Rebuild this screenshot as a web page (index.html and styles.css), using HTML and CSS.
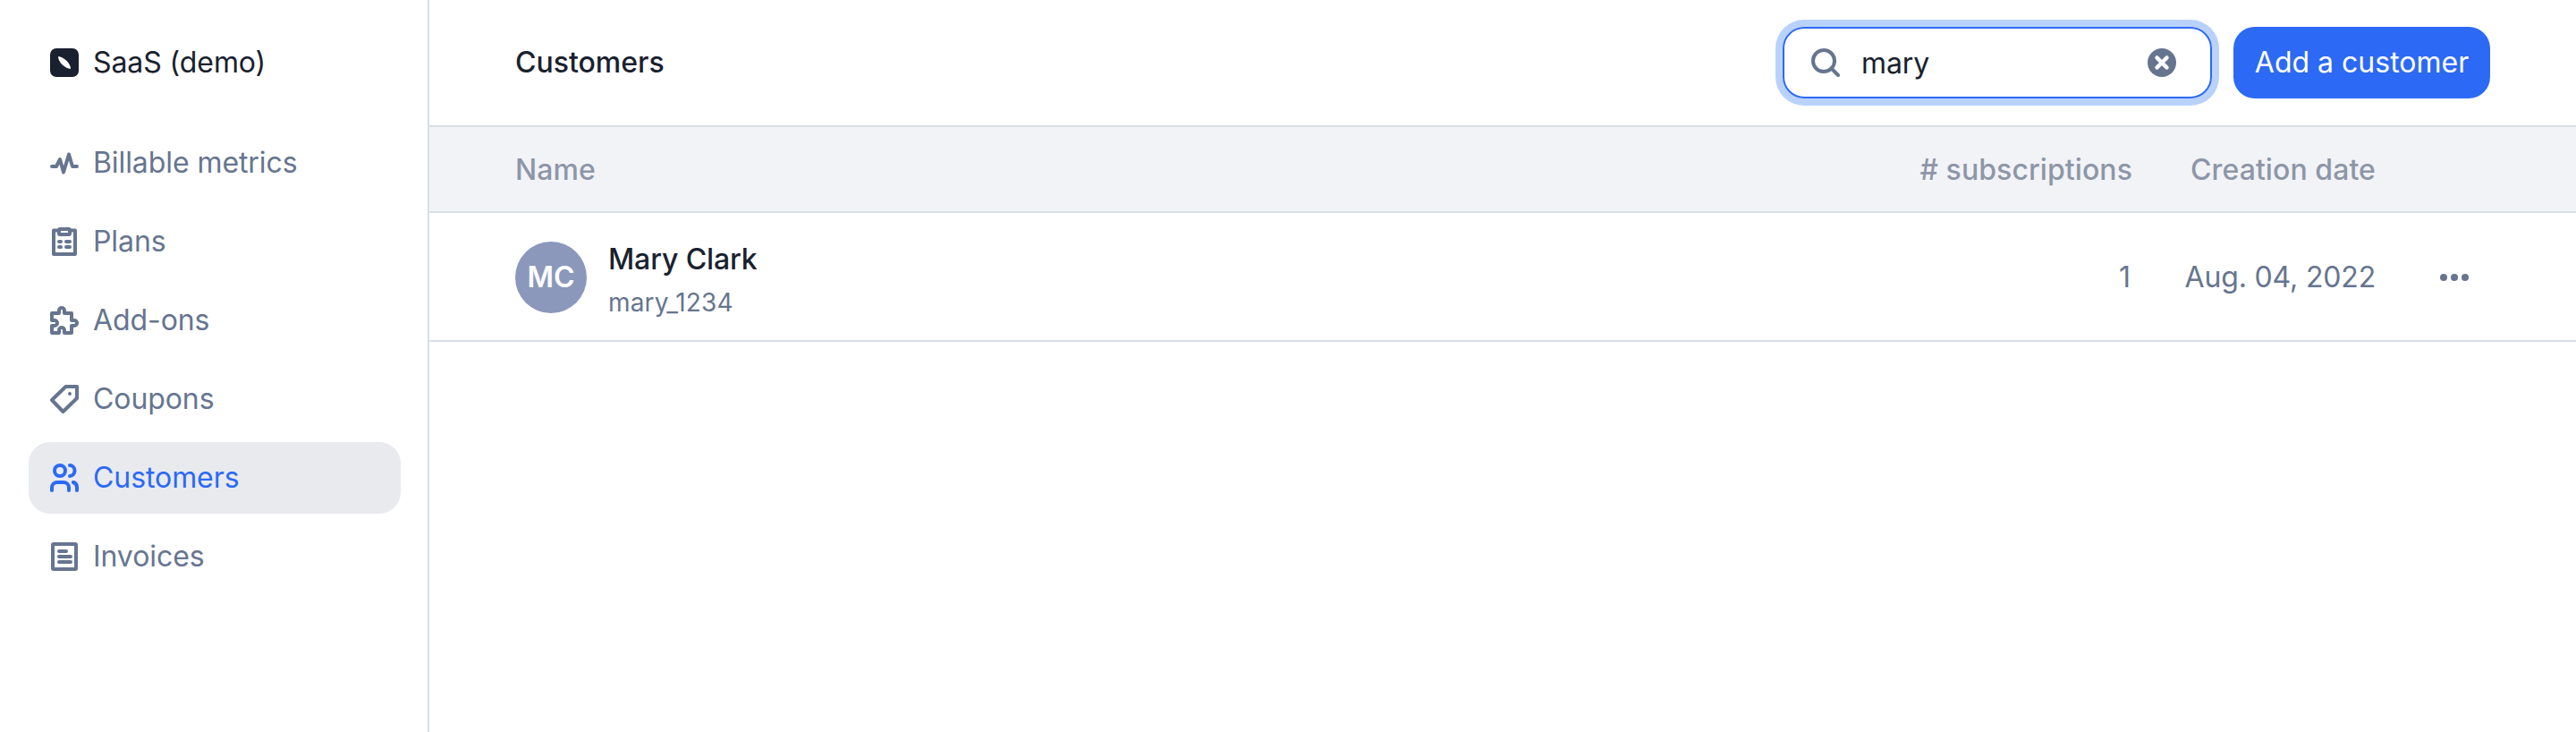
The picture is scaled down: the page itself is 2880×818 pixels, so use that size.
FILE: index.html
```html
<!DOCTYPE html>
<html lang="en">
<head>
<meta charset="utf-8">
<title>Customers</title>
<link rel="stylesheet" href="styles.css">
</head>
<body>
<div class="app">
  <aside class="sidebar">
    <div class="nav-item org">
      <svg class="icon" viewBox="0 0 32 32"><rect width="32" height="32" rx="7" fill="#19212e"/><path d="M9 9C15 9.500 23 16.500 23 23C16.500 22.500 9 15.500 9 9Z" fill="#fff"/></svg>
      <span>SaaS (demo)</span>
    </div>
    <nav class="nav">
      <a class="nav-item">
        <svg class="icon line" viewBox="0 0 32 32"><path d="M2 20H7L11 12L15 26.500L21 6.500L25 20H30"/></svg>
        <span>Billable metrics</span>
      </a>
      <a class="nav-item">
        <svg class="icon line" viewBox="0 0 32 32"><path d="M10 3.500H4V30H28V3.500H22"/><rect x="10" y="2" width="12" height="6" rx="1"/><path d="M10 16h2M18 16h4M10 22h2M18 22h4"/></svg>
        <span>Plans</span>
      </a>
      <a class="nav-item">
        <svg class="icon line" viewBox="0 0 32 32"><path d="M10 8V5a3 3 0 0 1 6 0V8H24V16H27a3 3 0 0 1 0 6H24V30H16V27a3 3 0 0 0-6 0V30H2V22H5a3 3 0 0 0 0-6H2V8Z"/></svg>
        <span>Add-ons</span>
      </a>
      <a class="nav-item">
        <svg class="icon line" viewBox="0 0 32 32"><path d="M17.500 2H30V15L14.500 30L2 17Z"/><circle class="solid" cx="22" cy="10" r="2"/></svg>
        <span>Coupons</span>
      </a>
      <a class="nav-item active">
        <svg class="icon line" viewBox="0 0 32 32"><circle cx="11" cy="8" r="6"/><path d="M22 2a5.500 6 0 0 1 0 12M2 30V27a6 6 0 0 1 6-6H15a6 6 0 0 1 6 6V30M26 21a6 6 0 0 1 4 6V30"/></svg>
        <span>Customers</span>
      </a>
      <a class="nav-item">
        <svg class="icon line" viewBox="0 0 32 32"><rect x="3" y="2" width="26" height="28" rx="1"/><path d="M10 10h8M10 16h13M10 22h13"/></svg>
        <span>Invoices</span>
      </a>
    </nav>
  </aside>
  <main class="main">
    <header class="header">
      <h1 class="title">Customers</h1>
      <div class="actions">
        <label class="search">
          <svg class="icon line" viewBox="0 0 32 32"><circle cx="14" cy="14" r="12"/><path d="M22.500 22.500L30 30"/></svg>
          <input class="search-input" type="text" value="mary">
          <svg class="icon" viewBox="0 0 32 32"><circle cx="16" cy="16" r="16" fill="#66758f"/><path d="M10.500 10.500L21.500 21.500M21.500 10.500L10.500 21.500" stroke="#fff" stroke-width="4.500" stroke-linecap="round"/></svg>
        </label>
        <button class="button">Add a customer</button>
      </div>
    </header>
    <div class="row head">
      <span>Name</span>
      <span class="num"># subscriptions</span>
      <span class="num">Creation date</span>
    </div>
    <div class="row">
      <div class="customer">
        <div class="avatar">MC</div>
        <div class="identity">
          <div class="name">Mary Clark</div>
          <div class="ref">mary_1234</div>
        </div>
      </div>
      <span class="num count">1</span>
      <span class="num date">Aug. 04, 2022</span>
      <svg class="icon more" viewBox="0 0 32 32"><g fill="#66758f"><circle cx="4" cy="16" r="4"/><circle cx="16" cy="16" r="4"/><circle cx="28" cy="16" r="4"/></g></svg>
    </div>
  </main>
</div>
</body>
</html>
```
FILE: styles.css
```css
* { box-sizing: border-box; }
body {
  margin: 0;
  background: #fff;
  color: #66758f;
  font-family: Inter, "Liberation Sans", sans-serif;
  font-size: 32px;
  line-height: 48px;
}
.app { display: flex; height: 818px; }
.sidebar {
  width: 480px;
  flex: none;
  padding: 30px 30px 0 32px;
  border-right: 2px solid #d9dee7;
}
.icon { width: 32px; height: 32px; flex: none; display: block; }
.line {
  fill: none;
  stroke: currentColor;
  stroke-width: 4;
  stroke-linecap: round;
  stroke-linejoin: round;
}
.solid { fill: currentColor; stroke: none; }
.nav { display: flex; flex-direction: column; gap: 8px; margin-top: 32px; }
.nav-item {
  display: flex;
  align-items: center;
  gap: 16px;
  width: 416px;
  height: 80px;
  padding: 0 24px;
  border-radius: 24px;
  letter-spacing: -0.08px;
}
.org { color: #19212e; }
.active { background: #e8eaee; color: #2c69f5; }
.main { flex: 1; min-width: 0; }
.header {
  display: flex;
  align-items: center;
  justify-content: space-between;
  height: 142px;
  padding: 0 96px;
  border-bottom: 2px solid #d9dee7;
}
.title { margin: 0; font-size: 32px; font-weight: 500; color: #19212e; }
.actions { display: flex; gap: 24px; }
.search {
  display: flex;
  align-items: center;
  width: 480px;
  height: 80px;
  padding: 0 38px 0 30px;
  border: 2px solid #2c69f5;
  border-radius: 24px;
  box-shadow: 0 0 0 8px #b9d2fb;
}
.search-input {
  flex: 1;
  min-width: 0;
  padding: 2px 24px 0;
  border: 0;
  outline: 0;
  background: none;
  color: #19212e;
  font: inherit;
  letter-spacing: -0.1px;
}
.button {
  width: 287px;
  height: 80px;
  padding: 0;
  border: 0;
  border-radius: 24px;
  background: #2c69f5;
  color: #fff;
  font: inherit;
  white-space: nowrap;
}
.row {
  display: grid;
  grid-template-columns: 1fr 300px 272px 104px;
  align-items: center;
  height: 144px;
  padding: 2px 120px 0 96px;
  border-bottom: 2px solid #d9dee7;
}
.head {
  height: 96px;
  background: #f2f3f6;
  color: #8d96a8;
  font-weight: 500;
  letter-spacing: 0.08px;
}
.num { text-align: right; }
.count { padding-right: 2px; }
.date { letter-spacing: -0.16px; }
.more { justify-self: end; }
.customer { display: flex; align-items: center; gap: 24px; }
.avatar {
  display: flex;
  align-items: center;
  justify-content: center;
  width: 80px;
  height: 80px;
  border-radius: 50%;
  background: #8b98bc;
  color: #fff;
  font-weight: 600;
}
.identity { padding-top: 8px; }
.name { color: #19212e; font-weight: 500; letter-spacing: -0.1px; }
.ref { font-size: 28px; letter-spacing: 0.15px; }
```
